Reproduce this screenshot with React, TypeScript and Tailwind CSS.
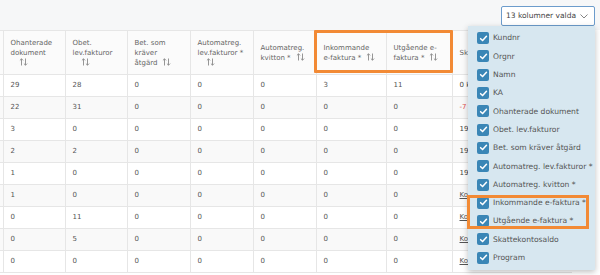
import React from "react";

const font = { fontFamily: "'DejaVu Sans', 'Noto Sans', sans-serif" };

type Head = { lines: string[] };

const heads: Head[] = [
  { lines: [""] },
  { lines: ["Ohanterade", "dokument"] },
  { lines: ["Obet.", "lev.fakturor"] },
  { lines: ["Bet. som", "kräver", "åtgärd"] },
  { lines: ["Automatreg.", "lev.fakturor *"] },
  { lines: ["Automatreg.", "kvitton *"] },
  { lines: ["Inkommande", "e-faktura *"] },
  { lines: ["Utgående e-", "faktura *"] },
  { lines: ["Skattekontosaldo"] },
];

const widths = [3, 62, 62, 63, 63, 63, 70, 66, 120];

const rows = [
  ["29", "28", "0", "0", "0", "3", "11"],
  ["22", "31", "0", "0", "0", "0", "0"],
  ["3", "0", "0", "0", "0", "0", "0"],
  ["2", "2", "0", "0", "0", "0", "0"],
  ["1", "0", "0", "0", "0", "0", "0"],
  ["1", "0", "0", "0", "0", "0", "0"],
  ["0", "11", "0", "0", "0", "0", "0"],
  ["0", "5", "0", "0", "0", "0", "0"],
  ["0", "0", "0", "0", "0", "0", "0"],
];

const lastCol = ["0 kr", "-7 512 kr", "19", "19", "19", "Koppla", "Koppla", "Koppla", "Koppla"];

const options = [
  "Kundnr",
  "Orgnr",
  "Namn",
  "KA",
  "Ohanterade dokument",
  "Obet. lev.fakturor",
  "Bet. som kräver åtgärd",
  "Automatreg. lev.fakturor *",
  "Automatreg. kvitton *",
  "Inkommande e-faktura *",
  "Utgående e-faktura *",
  "Skattekontosaldo",
  "Program",
];

const SortIcon = () => (
  <svg width="9" height="8" viewBox="0 0 9 8" className="inline-block ml-[5px] align-[-1px]" fill="none" stroke="#8a8a8a" strokeWidth="0.9">
    <path d="M2.5 7.5V0.8M0.9 2.4L2.5 0.8L4.1 2.4" />
    <path d="M6.5 0.5V7.2M4.9 5.6L6.5 7.2L8.1 5.6" />
  </svg>
);

const Check = () => (
  <span className="flex h-[12px] w-[12px] shrink-0 items-center justify-center rounded-[2px] bg-[#3a86b6]">
    <svg width="9" height="9" viewBox="0 0 10 10" fill="none" stroke="white" strokeWidth="1.7" strokeLinecap="round" strokeLinejoin="round">
      <path d="M1.8 5.2L4 7.3L8.3 2.6" />
    </svg>
  </span>
);

export default function App() {
  return (
    <div className="relative h-[275px] w-[600px] overflow-hidden bg-white text-[#555]" style={font}>
      <div className="flex h-[30px] items-start justify-end bg-[#f6f7f8] pr-[5px] pt-[6px]">
        <div className="flex h-[20px] w-[94px] items-center justify-between rounded-[2px] border border-[#6c9ccc] bg-white pl-[4px] pr-[6px] text-[7.5px] text-[#444]">
          <span className="whitespace-nowrap">13 kolumner valda</span>
          <svg width="8" height="5" viewBox="0 0 8 5" fill="none" stroke="#777" strokeWidth="0.9">
            <path d="M0.5 0.5L4 4L7.5 0.5" />
          </svg>
        </div>
      </div>

      <table className="table-fixed border-collapse text-[7px]" style={{ width: widths.reduce((a, b) => a + b, 0) }}>
        <colgroup>
          {widths.map((w, i) => (
            <col key={i} style={{ width: w }} />
          ))}
        </colgroup>
        <thead>
          <tr className="h-[44px] border-y border-[#e6e6e6] bg-[#fbfbfb]">
            {heads.map((h, i) => (
              <th key={i} className="border-r border-[#e6e6e6] px-[7px] text-left align-middle font-normal leading-[10px] text-[#666]">
                {i === 0 ? null : i === 8 ? (
                  <span className="whitespace-nowrap">Sk</span>
                ) : (
                  h.lines.map((l, j) => (
                    <div key={j} className="whitespace-nowrap">
                      {l}
                      {j === h.lines.length - 1 && (i === 3 || i >= 5) && <SortIcon />}
                    </div>
                  ))
                )}
                {(i === 1 || i === 2 || i === 4) && (
                  <div className="pl-[3px]">
                    <SortIcon />
                  </div>
                )}
              </th>
            ))}
          </tr>
        </thead>
        <tbody>
          {rows.map((r, i) => (
            <tr key={i} className={`h-[22px] border-b border-[#e6e6e6] ${i % 2 === 1 ? "bg-[#f9f9f9]" : "bg-white"}`}>
              <td className="border-r border-[#e6e6e6]" />
              {r.map((c, j) => (
                <td key={j} className="border-r border-[#e6e6e6] px-[7px] text-[#555]">
                  {c}
                </td>
              ))}
              <td className="whitespace-nowrap px-[7px]">
                {lastCol[i] === "Koppla" ? (
                  <span className="text-[#555] underline">{lastCol[i]}</span>
                ) : (
                  <span className={i === 1 ? "text-[#e05050]" : "text-[#444]"}>{lastCol[i]}</span>
                )}
              </td>
            </tr>
          ))}
        </tbody>
      </table>

      <div className="pointer-events-none absolute left-[314px] top-[30px] h-[43px] w-[139px] rounded-[1px] border-[3px] border-[#f28a35]" />

      <div className="absolute left-[468px] top-[26px] w-[127px] bg-[#d7e7f0] py-[3px] shadow-[0_2px_6px_rgba(0,0,0,0.25)]">
        {options.map((o) => (
          <div key={o} className="flex h-[18.3px] items-center gap-[4px] pl-[9px] text-[7.6px] text-[#555]">
            <Check />
            <span className="whitespace-nowrap">{o}</span>
          </div>
        ))}
      </div>

      <div className="pointer-events-none absolute left-[467px] top-[195px] h-[34px] w-[122px] border-[3px] border-[#f28a35]" />
    </div>
  );
}
